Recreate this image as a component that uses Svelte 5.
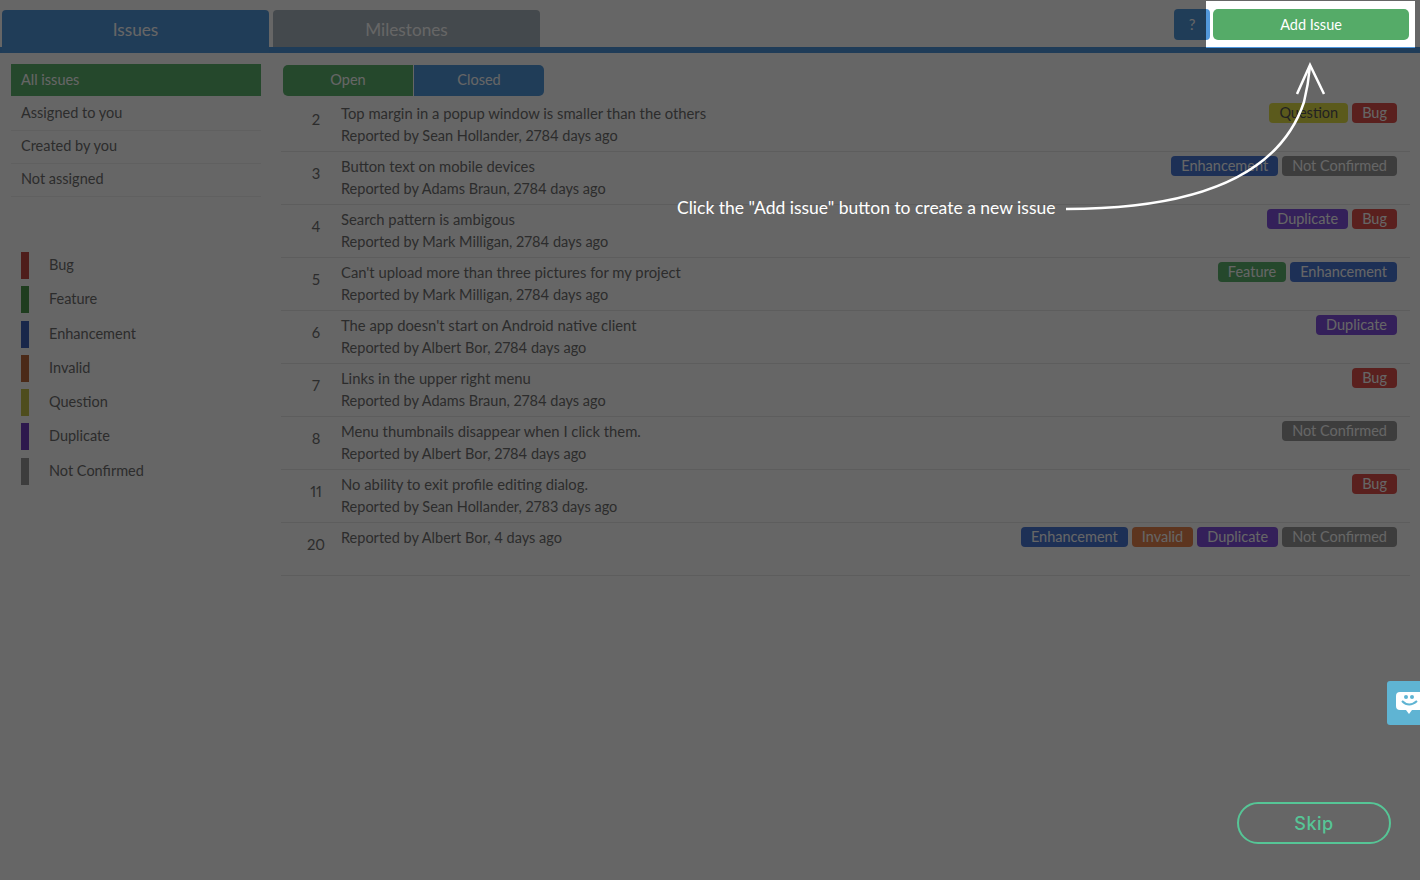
<script>
  const filters = ['All issues', 'Assigned to you', 'Created by you', 'Not assigned'];

  const labels = [
    { name: 'Bug', key: 'bug' },
    { name: 'Feature', key: 'feature' },
    { name: 'Enhancement', key: 'enhancement' },
    { name: 'Invalid', key: 'invalid' },
    { name: 'Question', key: 'question' },
    { name: 'Duplicate', key: 'duplicate' },
    { name: 'Not Confirmed', key: 'unconfirmed' }
  ];

  const issues = [
    { id: 2, title: 'Top margin in a popup window is smaller than the others', by: 'Sean Hollander, 2784 days ago', tags: ['question', 'bug'] },
    { id: 3, title: 'Button text on mobile devices', by: 'Adams Braun, 2784 days ago', tags: ['enhancement', 'unconfirmed'] },
    { id: 4, title: 'Search pattern is ambigous', by: 'Mark Milligan, 2784 days ago', tags: ['duplicate', 'bug'] },
    { id: 5, title: "Can't upload more than three pictures for my project", by: 'Mark Milligan, 2784 days ago', tags: ['feature', 'enhancement'] },
    { id: 6, title: "The app doesn't start on Android native client", by: 'Albert Bor, 2784 days ago', tags: ['duplicate'] },
    { id: 7, title: 'Links in the upper right menu', by: 'Adams Braun, 2784 days ago', tags: ['bug'] },
    { id: 8, title: 'Menu thumbnails disappear when I click them.', by: 'Albert Bor, 2784 days ago', tags: ['unconfirmed'] },
    { id: 11, title: 'No ability to exit profile editing dialog.', by: 'Sean Hollander, 2783 days ago', tags: ['bug'] },
    { id: 20, title: '', by: 'Albert Bor, 4 days ago', tags: ['enhancement', 'invalid', 'duplicate', 'unconfirmed'] }
  ];

  const labelName = (key) => labels.find((l) => l.key === key).name;
</script>

<div class="page">
  <header class="topbar">
    <button class="tab active">Issues</button>
    <button class="tab">Milestones</button>
    <div class="actions">
      <button class="help">?</button>
      <button class="add">Add Issue</button>
    </div>
  </header>

  <div class="content">
    <aside class="sidebar">
      <ul class="filters">
        {#each filters as filter, i}
          <li class:current={i === 0}>{filter}</li>
        {/each}
      </ul>
      <ul class="labels">
        {#each labels as label}
          <li><span class="swatch {label.key}"></span>{label.name}</li>
        {/each}
      </ul>
    </aside>

    <main class="issues">
      <div class="state">
        <button class="open">Open</button>
        <button class="closed">Closed</button>
      </div>
      {#each issues as issue (issue.id)}
        <div class="issue">
          <span class="num">{issue.id}</span>
          <div class="text">
            {#if issue.title}<div>{issue.title}</div>{/if}
            <div class="by">Reported by {issue.by}</div>
          </div>
          <div class="tags">
            {#each issue.tags as tag}
              <span class="tag {tag}">{labelName(tag)}</span>
            {/each}
          </div>
        </div>
      {/each}
    </main>
  </div>
</div>

<!-- tour layer: the spotlight's shadow is what dims the page -->
<div class="spotlight"></div>

<div class="hint">Click the "Add issue" button to create a new issue</div>

<svg class="arrow" width="280" height="170" viewBox="0 0 280 170" fill="none" stroke="#fff" stroke-width="2.500">
  <path d="M2 147 C130 147 215 115 240 40 C243 28 245 15 246 4" />
  <path d="M233 32 L246 3 L260 32" />
</svg>

<button class="chat" aria-label="Chat">
  <svg width="33" height="44" viewBox="0 0 33 44">
    <path d="M13 11 H33 V29 H25 L22 33 L19 29 H13 Q9 29 9 25 V15 Q9 11 13 11 Z" fill="#fff" />
    <circle cx="19" cy="16" r="2" fill="#5fb4d3" />
    <circle cx="25" cy="16" r="2" fill="#5fb4d3" />
    <path d="M15 20 Q22 27 30 20" stroke="#5fb4d3" stroke-width="2" fill="none" />
  </svg>
</button>

<button class="skip">Skip</button>

<style>
  :global(body) {
    margin: 0;
    background: #fff;
    overflow: hidden;
    font-family: Lato, 'Noto Sans', sans-serif;
    font-variant-numeric: proportional-nums;
  }

  button {
    font-family: inherit;
    font-variant-numeric: inherit;
    border: none;
    padding: 0;
  }

  .page {
    height: 880px;
    color: #6f6f6f;
    font-size: 14.500px;
  }

  .topbar {
    display: flex;
    align-items: flex-end;
    gap: 4px;
    height: 47px;
    padding-left: 2px;
    border-bottom: 6px solid #4f97dd;
  }

  .tab {
    width: 267px;
    height: 37px;
    border-radius: 4px 4px 0 0;
    background: #aab6c0;
    color: #fff;
    font-size: 17.200px;
    padding-top: 1px;
  }

  .tab.active {
    background: #5298db;
    height: 43px;
    margin-bottom: -6px;
    padding: 0 0 5px;
  }

  .actions {
    display: flex;
    align-self: flex-start;
    margin-left: auto;
    margin-top: 9px;
    margin-right: 11px;
    gap: 3px;
  }

  .help {
    width: 36px;
    height: 31px;
    border-radius: 4px;
    background: #5298db;
    color: #fff;
    font-size: 15px;
    padding-bottom: 2px;
  }

  .add {
    width: 196px;
    height: 31px;
    border-radius: 5px;
    background: #55ab68;
    color: #fff;
    font-size: 14.500px;
    padding-bottom: 1px;
  }

  .content {
    display: flex;
    padding-top: 11px;
  }

  .sidebar {
    width: 250px;
    margin-left: 11px;
    flex: none;
  }

  .filters,
  .labels {
    list-style: none;
    margin: 0;
    padding: 0;
  }

  .filters li {
    height: 33px;
    line-height: 30px;
    padding-left: 10px;
    box-sizing: border-box;
    border-bottom: 1px solid #8f8f8f22;
  }

  .filters li.current {
    height: 32px;
    line-height: 31px;
    margin-bottom: 2px;
    border-bottom: none;
    background: #5db36f;
    color: #fff;
  }

  .labels {
    margin-top: 55px;
    display: flex;
    flex-direction: column;
    gap: 7.300px;
  }

  .labels li {
    display: flex;
    align-items: flex-start;
    height: 27px;
    line-height: 26px;
    padding-left: 10px;
  }

  .swatch {
    width: 8px;
    height: 27px;
    margin-right: 20px;
  }

  .issues {
    flex: 1;
    margin-left: 20px;
    margin-right: 10px;
  }

  .state {
    display: flex;
    margin: 1px 0 0 2px;
    width: 261px;
    height: 31px;
  }

  .state button {
    flex: 1;
    color: #fff;
    font-size: 14.500px;
    padding-bottom: 2px;
  }

  .open {
    background: #5db36f;
    border-radius: 5px 0 0 5px;
    border-right: 1px solid #fff;
  }

  .closed {
    background: #5298db;
    border-radius: 0 5px 5px 0;
  }

  .issue {
    display: flex;
    height: 53px;
    box-sizing: border-box;
    border-bottom: 1px solid #8f8f8f33;
    line-height: 22px;
    font-size: 14.800px;
    padding-top: 3px;
  }

  .state + .issue {
    height: 56px;
    padding-top: 6px;
  }

  .num {
    width: 60px;
    box-sizing: border-box;
    padding: 7px 0 0 10px;
    text-align: center;
    flex: none;
  }

  .state + .issue .num {
    padding-top: 6px;
  }

  .text {
    flex: 1;
  }

  .by {
    font-size: 14.500px;
    margin-top: 1px;
  }

  .tags {
    display: flex;
    align-self: flex-start;
    gap: 4px;
    margin: 1px 13px 0 0;
    font-size: 14.500px;
  }

  .tag {
    height: 20px;
    line-height: 19px;
    padding: 0 10px;
    border-radius: 4px;
    color: #fff;
  }

  .bug { background: #e0504c; }
  .feature { background: #5db36f; }
  .enhancement { background: #4a78d8; }
  .invalid { background: #e8844e; }
  .question { background: #e4e048; color: #555; }
  .duplicate { background: #8350e0; }
  .unconfirmed { background: #989898; }

  .swatch.bug { background: #c44a44; }
  .swatch.feature { background: #4f9a4f; }
  .swatch.enhancement { background: #3f63b8; }
  .swatch.invalid { background: #bc6a3c; }
  .swatch.question { background: #c4c04a; }
  .swatch.duplicate { background: #7040c0; }
  .swatch.unconfirmed { background: #989898; }

  .spotlight {
    position: absolute;
    left: 1206px;
    top: 1px;
    width: 209px;
    height: 47px;
    box-shadow: 0 0 0 2000px rgba(0, 0, 0, 0.6);
  }

  .hint {
    position: absolute;
    left: 677px;
    top: 197px;
    color: #fff;
    font-family: Lato, cursive;
    font-size: 17.500px;
    white-space: nowrap;
  }

  .arrow {
    position: absolute;
    left: 1064px;
    top: 62px;
  }

  .chat {
    position: absolute;
    right: 0;
    top: 681px;
    width: 33px;
    height: 44px;
    background: #5fb4d3;
    border-radius: 3px 0 0 3px;
    display: flex;
  }

  .skip {
    position: absolute;
    left: 1237px;
    top: 802px;
    width: 154px;
    height: 42px;
    box-sizing: border-box;
    border: 2px solid #56c596;
    border-radius: 21px;
    background: transparent;
    color: #56c596;
    font-family: Inter, sans-serif;
    font-size: 18px;
    font-weight: 500;
    letter-spacing: 0.500px;
  }
</style>
